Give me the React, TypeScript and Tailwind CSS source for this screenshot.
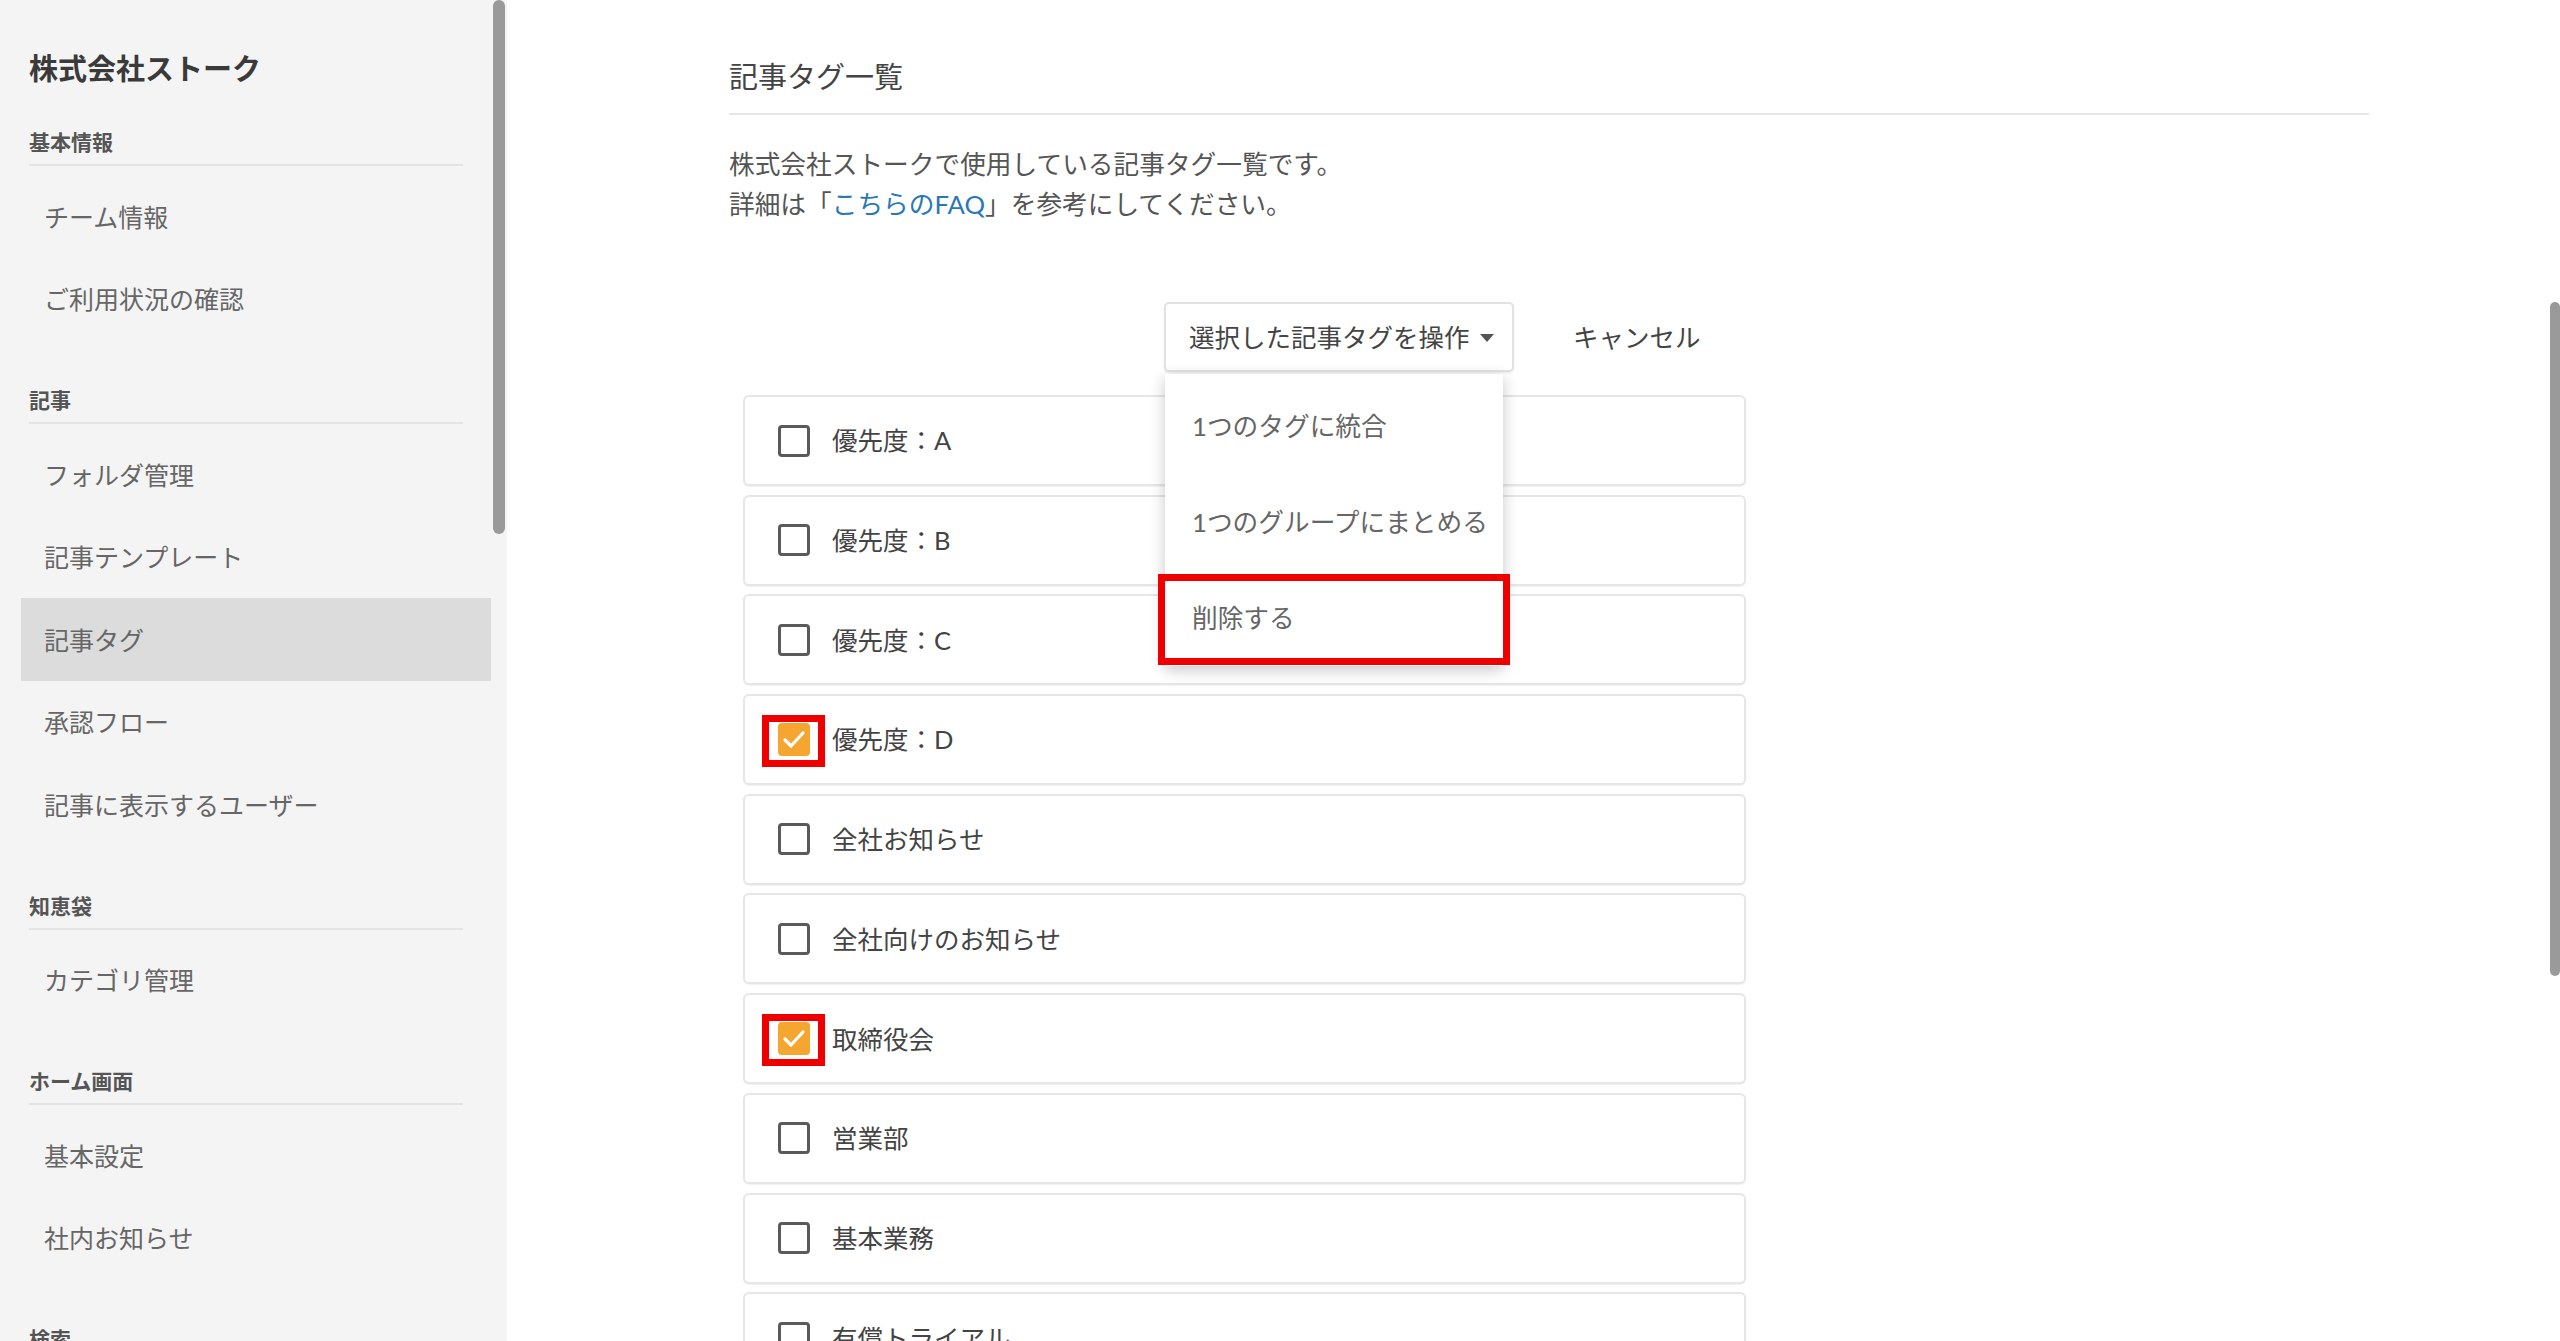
type Section = { title: string; items: string[] };

const sections: Section[] = [
  { title: '基本情報', items: ['チーム情報', 'ご利用状況の確認'] },
  { title: '記事', items: ['フォルダ管理', '記事テンプレート', '記事タグ', '承認フロー', '記事に表示するユーザー'] },
  { title: '知恵袋', items: ['カテゴリ管理'] },
  { title: 'ホーム画面', items: ['基本設定', '社内お知らせ'] },
  { title: '検索', items: [] },
];

const tags = [
  { name: '優先度：A', checked: false },
  { name: '優先度：B', checked: false },
  { name: '優先度：C', checked: false },
  { name: '優先度：D', checked: true },
  { name: '全社お知らせ', checked: false },
  { name: '全社向けのお知らせ', checked: false },
  { name: '取締役会', checked: true },
  { name: '営業部', checked: false },
  { name: '基本業務', checked: false },
  { name: '有償トライアル', checked: false },
];

const menuItems = ['1つのタグに統合', '1つのグループにまとめる', '削除する'];

function Sidebar() {
  return (
    <aside className="relative w-[507px] shrink-0 h-full bg-[#f4f4f4] pl-[21px] pr-[16px] pt-[47px] font-['Noto_Sans_CJK_JP',sans-serif] overflow-hidden">
      <div className="pl-[8px] text-[29px] leading-[40px] font-bold text-[#3a3a3a]">株式会社ストーク</div>

      {sections.map((s, i) => (
        <div key={s.title} className={i === 0 ? 'mt-[40px]' : 'mt-[45px]'}>
          <div className="ml-[8px] mr-[28px] border-b-2 border-[#e4e4e4] pb-[9px] text-[21px] leading-[28px] font-bold text-[#555]">
            {s.title}
          </div>
          <div className="mt-[9px]">
            {s.items.map((item) => (
              <div
                key={item}
                className={`h-[82.5px] flex items-center pl-[23px] text-[25px] text-[#666] ${item === '記事タグ' ? 'bg-[#dcdcdc]' : ''}`}
              >
                {item}
              </div>
            ))}
          </div>
        </div>
      ))}

      {/* scroll thumb */}
      <div className="absolute left-[493px] top-0 w-[12px] h-[534px] rounded-full bg-[#9a9a9a]" />
    </aside>
  );
}

function Checkbox({ checked }: { checked: boolean }) {
  if (!checked) {
    return <div className="w-[32px] h-[32px] shrink-0 rounded-[4px] border-[3px] border-[#5a5a5a] bg-white" />;
  }
  return (
    <div className="relative w-[32px] h-[33px] shrink-0">
      <div className="w-full h-full rounded-[4px] bg-[#f5a631]">
        <svg viewBox="0 0 32 33" className="w-full h-full">
          <polyline points="7,17 13,23 25,10" fill="none" stroke="#fff" strokeWidth="3.2" strokeLinecap="round" strokeLinejoin="round" />
        </svg>
      </div>
      {/* highlight */}
      <div className="absolute -left-[16px] -right-[15px] -top-[8px] -bottom-[11px] border-[7px] border-[#ee0000]" />
    </div>
  );
}

function TagRow({ name, checked }: { name: string; checked: boolean }) {
  return (
    <div className="h-[91px] shrink-0 flex items-center gap-[22px] pl-[33px] rounded-[6px] border-2 border-[#e6e6e6] bg-white shadow-[0_1px_1px_rgba(0,0,0,0.06)]">
      <Checkbox checked={checked} />
      <span className="text-[25.5px] text-[#444]">{name}</span>
    </div>
  );
}

export default function App() {
  return (
    <div className="flex h-screen w-full overflow-hidden bg-white">
      <Sidebar />

      <main className="relative flex-1 h-full pl-[222px] pr-[191px] pt-[57px] font-['Lato','Noto_Sans_CJK_JP',sans-serif] text-[#555]">
        <h1 className="text-[29px] leading-[40px] text-[#444] pb-[16px] border-b-2 border-[#e6e6e6]">記事タグ一覧</h1>

        <div className="mt-[29px] text-[25.7px] leading-[40px] text-[#555]">
          <p>株式会社ストークで使用している記事タグ一覧です。</p>
          <p>
            詳細は「<span className="text-[#2a78b5]">こちらのFAQ</span>」を参考にしてください。
          </p>
        </div>

        <div className="mt-[78px] ml-[435px] flex items-center gap-[59px]">
          <button className="w-[350px] h-[70px] flex items-center pl-[23px] gap-[10px] rounded-[5px] border-2 border-[#e2e2e2] bg-white text-[25.5px] text-[#444] shadow-[0_1px_2px_rgba(0,0,0,0.08)]">
            選択した記事タグを操作
            <svg width="14" height="9" viewBox="0 0 14 9" className="mt-[2px]">
              <path d="M0 0 H14 L7 8 Z" fill="#555" />
            </svg>
          </button>
          <span className="text-[25.5px] text-[#444]">キャンセル</span>
        </div>

        <div className="mt-[23px] ml-[14px] w-[1003px] flex flex-col gap-[8.7px]">
          {tags.map((t) => (
            <TagRow key={t.name} name={t.name} checked={t.checked} />
          ))}
        </div>

        {/* open dropdown */}
        <div className="absolute left-[658px] top-[374px] w-[338px] pt-[4px] bg-white shadow-[0_4px_14px_rgba(0,0,0,0.22)]">
          {menuItems.map((m) => (
            <div key={m} className="h-[96px] flex items-center pl-[27px] text-[25.7px] text-[#666]">
              {m}
            </div>
          ))}
        </div>
        <div className="absolute left-[651px] top-[574px] w-[352px] h-[91px] border-[7px] border-[#ee0000]" />

        {/* page scroll thumb */}
        <div className="absolute right-0 top-[302px] w-[10px] h-[674px] rounded-full bg-[#9a9a9a]" />
      </main>
    </div>
  );
}
